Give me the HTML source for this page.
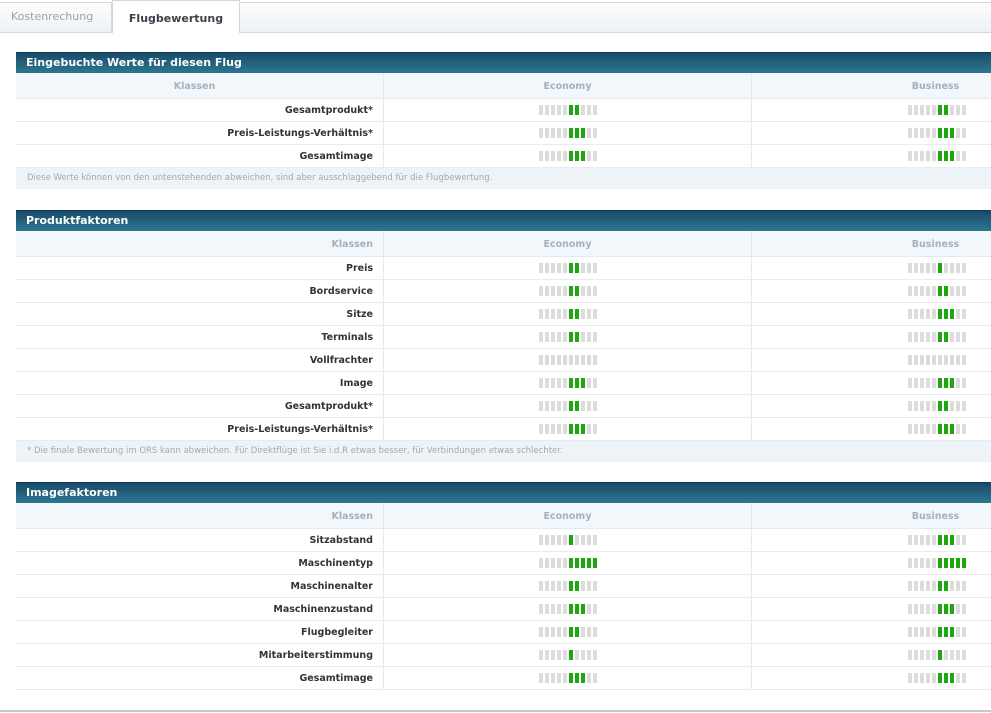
<!DOCTYPE html>
<html><head><meta charset="utf-8"><style>
*{margin:0;padding:0;box-sizing:border-box}
body{width:991px;height:713px;overflow:hidden;background:#fff;font-family:"DejaVu Sans",Verdana,"Liberation Sans",sans-serif;position:relative}
.tabs{position:absolute;left:0;top:0;width:991px;height:33px}
.tabbg{position:absolute;left:0;top:2px;width:991px;height:31px;border-top:1px solid #d6d9dc;border-bottom:1px solid #d6d9dc;background:linear-gradient(#fdfdfe,#eef1f4)}
.t1{position:absolute;left:0;top:2px;width:112px;height:31px;font-size:11px;color:#9aa3ab;line-height:30px;padding-left:11px;border-right:1px solid #d6d9dc}
.t2{position:absolute;left:112px;top:0;width:128px;height:33px;background:#fff;border:1px solid #d6d9dc;border-bottom:none;font-size:11px;font-weight:bold;color:#3a4148;line-height:36px;text-align:center}
.sec{position:absolute;left:16px;width:975px}
.hd{height:21px;background:linear-gradient(#184b69,#2d7790);border-top:1px solid #0f3a55;color:#fff;font-weight:bold;font-size:11px;line-height:20px;padding-left:10px}
.th{height:26px;background:#f1f7fb;position:relative;border-bottom:1px solid #e2ebf0;font-size:9.5px;font-weight:bold;color:#a5b1b9}
.row{height:23px;position:relative;border-bottom:1px solid #e6ecef}
.c1{position:absolute;left:0;width:367px;top:0;height:100%;text-align:right;padding-right:10px;font-size:9.5px;font-weight:bold;color:#333;line-height:23px}
.th .c1{line-height:27px;color:#a5b1b9}
.c2{position:absolute;left:367px;width:368px;top:0;height:100%;border-left:1px solid #e3e9ee;text-align:center}
.c3{position:absolute;left:735px;width:368px;top:0;height:100%;border-left:1px solid #e3e9ee;text-align:center}
.th .c2,.th .c3{line-height:27px}
.bar{position:absolute;top:6px;width:60px;height:10px;font-size:0}
.c2 .bar{left:155px}.c3 .bar{left:156px}
.bar i{display:inline-block;width:4px;height:10px;margin-right:2px;background:#dcdcdc}
.bar i.g{background:#1ea70f}
.note{height:21px;background:#eef3f8;font-size:8.5px;color:#a2a9b0;line-height:21px;padding-left:11px}
.bottom{position:absolute;left:0;top:710px;width:991px;height:2px;background:#c8c8c8}
</style></head><body>
<div class="tabs"><div class="tabbg"></div><div class="t1">Kostenrechung</div><div class="t2">Flugbewertung</div></div>

<div class="sec" style="top:52px">
<div class="hd">Eingebuchte Werte für diesen Flug</div>
<div class="th"><div class="c1" style="text-align:center">Klassen</div><div class="c2">Economy</div><div class="c3">Business</div></div>
<div class="row"><div class="c1">Gesamtprodukt*</div><div class="c2"><span class="bar"><i></i><i></i><i></i><i></i><i></i><i class="g"></i><i class="g"></i><i></i><i></i><i></i></span></div><div class="c3"><span class="bar"><i></i><i></i><i></i><i></i><i></i><i class="g"></i><i class="g"></i><i></i><i></i><i></i></span></div></div>
<div class="row"><div class="c1">Preis-Leistungs-Verhältnis*</div><div class="c2"><span class="bar"><i></i><i></i><i></i><i></i><i></i><i class="g"></i><i class="g"></i><i class="g"></i><i></i><i></i></span></div><div class="c3"><span class="bar"><i></i><i></i><i></i><i></i><i></i><i class="g"></i><i class="g"></i><i class="g"></i><i></i><i></i></span></div></div>
<div class="row"><div class="c1">Gesamtimage</div><div class="c2"><span class="bar"><i></i><i></i><i></i><i></i><i></i><i class="g"></i><i class="g"></i><i class="g"></i><i></i><i></i></span></div><div class="c3"><span class="bar"><i></i><i></i><i></i><i></i><i></i><i class="g"></i><i class="g"></i><i class="g"></i><i></i><i></i></span></div></div>
<div class="note">Diese Werte können von den untenstehenden abweichen, sind aber ausschlaggebend für die Flugbewertung.</div>
</div>

<div class="sec" style="top:210px">
<div class="hd">Produktfaktoren</div>
<div class="th"><div class="c1">Klassen</div><div class="c2">Economy</div><div class="c3">Business</div></div>
<div class="row"><div class="c1">Preis</div><div class="c2"><span class="bar"><i></i><i></i><i></i><i></i><i></i><i class="g"></i><i class="g"></i><i></i><i></i><i></i></span></div><div class="c3"><span class="bar"><i></i><i></i><i></i><i></i><i></i><i class="g"></i><i></i><i></i><i></i><i></i></span></div></div>
<div class="row"><div class="c1">Bordservice</div><div class="c2"><span class="bar"><i></i><i></i><i></i><i></i><i></i><i class="g"></i><i class="g"></i><i></i><i></i><i></i></span></div><div class="c3"><span class="bar"><i></i><i></i><i></i><i></i><i></i><i class="g"></i><i class="g"></i><i></i><i></i><i></i></span></div></div>
<div class="row"><div class="c1">Sitze</div><div class="c2"><span class="bar"><i></i><i></i><i></i><i></i><i></i><i class="g"></i><i class="g"></i><i></i><i></i><i></i></span></div><div class="c3"><span class="bar"><i></i><i></i><i></i><i></i><i></i><i class="g"></i><i class="g"></i><i class="g"></i><i></i><i></i></span></div></div>
<div class="row"><div class="c1">Terminals</div><div class="c2"><span class="bar"><i></i><i></i><i></i><i></i><i></i><i class="g"></i><i class="g"></i><i></i><i></i><i></i></span></div><div class="c3"><span class="bar"><i></i><i></i><i></i><i></i><i></i><i class="g"></i><i class="g"></i><i></i><i></i><i></i></span></div></div>
<div class="row"><div class="c1">Vollfrachter</div><div class="c2"><span class="bar"><i></i><i></i><i></i><i></i><i></i><i></i><i></i><i></i><i></i><i></i></span></div><div class="c3"><span class="bar"><i></i><i></i><i></i><i></i><i></i><i></i><i></i><i></i><i></i><i></i></span></div></div>
<div class="row"><div class="c1">Image</div><div class="c2"><span class="bar"><i></i><i></i><i></i><i></i><i></i><i class="g"></i><i class="g"></i><i class="g"></i><i></i><i></i></span></div><div class="c3"><span class="bar"><i></i><i></i><i></i><i></i><i></i><i class="g"></i><i class="g"></i><i class="g"></i><i></i><i></i></span></div></div>
<div class="row"><div class="c1">Gesamtprodukt*</div><div class="c2"><span class="bar"><i></i><i></i><i></i><i></i><i></i><i class="g"></i><i class="g"></i><i></i><i></i><i></i></span></div><div class="c3"><span class="bar"><i></i><i></i><i></i><i></i><i></i><i class="g"></i><i class="g"></i><i></i><i></i><i></i></span></div></div>
<div class="row"><div class="c1">Preis-Leistungs-Verhältnis*</div><div class="c2"><span class="bar"><i></i><i></i><i></i><i></i><i></i><i class="g"></i><i class="g"></i><i class="g"></i><i></i><i></i></span></div><div class="c3"><span class="bar"><i></i><i></i><i></i><i></i><i></i><i class="g"></i><i class="g"></i><i class="g"></i><i></i><i></i></span></div></div>
<div class="note">* Die finale Bewertung im ORS kann abweichen. Für Direktflüge ist Sie i.d.R etwas besser, für Verbindungen etwas schlechter.</div>
</div>

<div class="sec" style="top:482px">
<div class="hd">Imagefaktoren</div>
<div class="th"><div class="c1">Klassen</div><div class="c2">Economy</div><div class="c3">Business</div></div>
<div class="row"><div class="c1">Sitzabstand</div><div class="c2"><span class="bar"><i></i><i></i><i></i><i></i><i></i><i class="g"></i><i></i><i></i><i></i><i></i></span></div><div class="c3"><span class="bar"><i></i><i></i><i></i><i></i><i></i><i class="g"></i><i class="g"></i><i class="g"></i><i></i><i></i></span></div></div>
<div class="row"><div class="c1">Maschinentyp</div><div class="c2"><span class="bar"><i></i><i></i><i></i><i></i><i></i><i class="g"></i><i class="g"></i><i class="g"></i><i class="g"></i><i class="g"></i></span></div><div class="c3"><span class="bar"><i></i><i></i><i></i><i></i><i></i><i class="g"></i><i class="g"></i><i class="g"></i><i class="g"></i><i class="g"></i></span></div></div>
<div class="row"><div class="c1">Maschinenalter</div><div class="c2"><span class="bar"><i></i><i></i><i></i><i></i><i></i><i class="g"></i><i class="g"></i><i></i><i></i><i></i></span></div><div class="c3"><span class="bar"><i></i><i></i><i></i><i></i><i></i><i class="g"></i><i class="g"></i><i></i><i></i><i></i></span></div></div>
<div class="row"><div class="c1">Maschinenzustand</div><div class="c2"><span class="bar"><i></i><i></i><i></i><i></i><i></i><i class="g"></i><i class="g"></i><i class="g"></i><i></i><i></i></span></div><div class="c3"><span class="bar"><i></i><i></i><i></i><i></i><i></i><i class="g"></i><i class="g"></i><i class="g"></i><i></i><i></i></span></div></div>
<div class="row"><div class="c1">Flugbegleiter</div><div class="c2"><span class="bar"><i></i><i></i><i></i><i></i><i></i><i class="g"></i><i class="g"></i><i></i><i></i><i></i></span></div><div class="c3"><span class="bar"><i></i><i></i><i></i><i></i><i></i><i class="g"></i><i class="g"></i><i class="g"></i><i></i><i></i></span></div></div>
<div class="row"><div class="c1">Mitarbeiterstimmung</div><div class="c2"><span class="bar"><i></i><i></i><i></i><i></i><i></i><i class="g"></i><i></i><i></i><i></i><i></i></span></div><div class="c3"><span class="bar"><i></i><i></i><i></i><i></i><i></i><i class="g"></i><i></i><i></i><i></i><i></i></span></div></div>
<div class="row"><div class="c1">Gesamtimage</div><div class="c2"><span class="bar"><i></i><i></i><i></i><i></i><i></i><i class="g"></i><i class="g"></i><i class="g"></i><i></i><i></i></span></div><div class="c3"><span class="bar"><i></i><i></i><i></i><i></i><i></i><i class="g"></i><i class="g"></i><i class="g"></i><i></i><i></i></span></div></div>
</div>
<div class="bottom"></div>
</body></html>
